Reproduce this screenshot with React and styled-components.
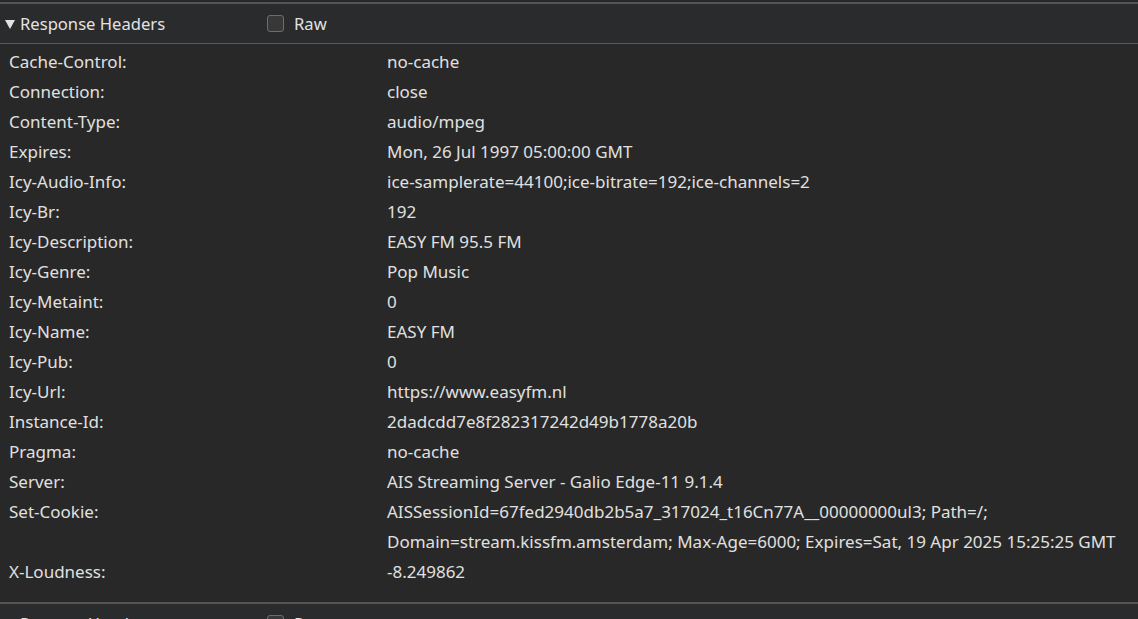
import React from "react";
import styled, { createGlobalStyle } from "styled-components";

const Global = createGlobalStyle`
  html, body { margin: 0; padding: 0; background: #282828; overflow: hidden; }
  body { font-family: "Noto Sans", "Open Sans", sans-serif; }
`;

const Page = styled.div`
  width: 1138px;
  height: 619px;
  overflow: hidden;
  background: #282828;
  padding-top: 2px;
  box-sizing: border-box;
`;

const Section = styled.section`
  border-top: 2px solid #535456;
`;

const Header = styled.div`
  display: flex;
  align-items: center;
  height: 39px;
  background: #2a2b2d;
  border-bottom: 1px solid #5b5b5b;
  color: #e2e2e2;
  font-size: 16.6px;
`;

const Toggle = styled.div`
  display: flex;
  align-items: center;
  width: 267px;
  padding-left: 5px;
  box-sizing: border-box;
`;

const Arrow = styled.span`
  display: inline-block;
  width: 0;
  height: 0;
  border-left: 5px solid transparent;
  border-right: 5px solid transparent;
  border-top: 9px solid #e2e2e2;
  margin-right: 5px;
  margin-top: 1px;
`;

const CheckLabel = styled.label`
  display: flex;
  align-items: center;
  gap: 10px;
`;

const Box = styled.span`
  width: 15px;
  height: 15px;
  border: 1px solid #6d6d6d;
  border-radius: 3px;
  background: #383838;
`;

const Rows = styled.div`
  padding: 2px 0 16px;
`;

const Row = styled.div`
  display: flex;
  height: 30px;
  align-items: center;
  color: #e0e0e0;
  font-size: 17px;
`;

const Name = styled.div`
  width: 378px;
  padding-left: 9px;
  flex-shrink: 0;
`;

const Value = styled.div`
  white-space: nowrap;
`;

const rows = [
  ["Cache-Control:", "no-cache"],
  ["Connection:", "close"],
  ["Content-Type:", "audio/mpeg"],
  ["Expires:", "Mon, 26 Jul 1997 05:00:00 GMT"],
  ["Icy-Audio-Info:", "ice-samplerate=44100;ice-bitrate=192;ice-channels=2"],
  ["Icy-Br:", "192"],
  ["Icy-Description:", "EASY FM 95.5 FM"],
  ["Icy-Genre:", "Pop Music"],
  ["Icy-Metaint:", "0"],
  ["Icy-Name:", "EASY FM"],
  ["Icy-Pub:", "0"],
  ["Icy-Url:", "https://www.easyfm.nl"],
  ["Instance-Id:", "2dadcdd7e8f282317242d49b1778a20b"],
  ["Pragma:", "no-cache"],
  ["Server:", "AIS Streaming Server - Galio Edge-11 9.1.4"],
  ["Set-Cookie:", "AISSessionId=67fed2940db2b5a7_317024_t16Cn77A__00000000ul3; Path=/;"],
  ["", "Domain=stream.kissfm.amsterdam; Max-Age=6000; Expires=Sat, 19 Apr 2025 15:25:25 GMT"],
  ["X-Loudness:", "-8.249862"],
];

function SectionHeader({ title }) {
  return (
    <Header>
      <Toggle>
        <Arrow />
        {title}
      </Toggle>
      <CheckLabel>
        <Box />
        Raw
      </CheckLabel>
    </Header>
  );
}

export default function App() {
  return (
    <Page>
      <Global />
      <Section>
        <SectionHeader title="Response Headers" />
        <Rows>
          {rows.map(([n, v], i) => (
            <Row key={i}>
              <Name>{n}</Name>
              <Value>{v}</Value>
            </Row>
          ))}
        </Rows>
      </Section>
      <Section>
        <SectionHeader title="Request Headers" />
      </Section>
    </Page>
  );
}
